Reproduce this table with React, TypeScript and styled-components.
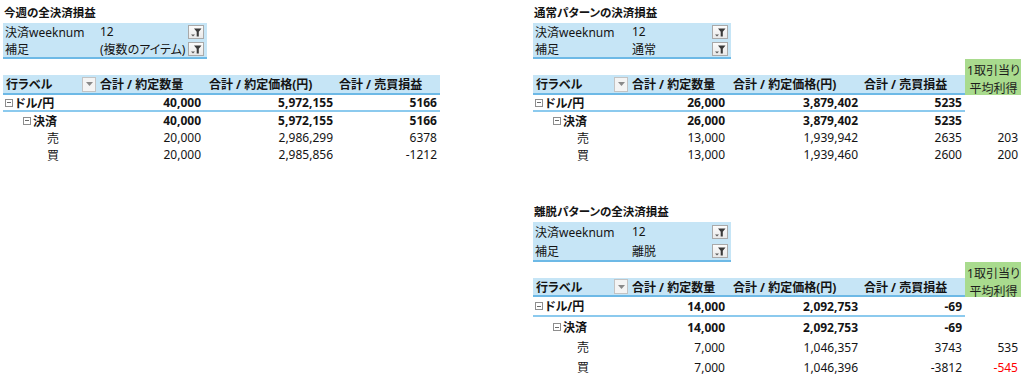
import React from 'react'
import styled, { createGlobalStyle } from 'styled-components'

const BLUE = '#c6e5f6'
const LINE = '#6db9e6'
const ROWLINE = '#8ccaee'
const GREEN = '#a9db8e'

type Row = {
  label: string
  level: 0 | 1 | 2
  values: string[]
  extra?: string
}

type Metrics = {
  title: number
  filter: number
  spacer: number
  head: number
  row: number
}

type Pivot = {
  title: string
  filters: [string, string][]
  cols: number[]
  rows: Row[]
  green?: boolean
  m: Metrics
}

const HEADERS = ['行ラベル', '合計 / 約定数量', '合計 / 約定価格(円)', '合計 / 売買損益']

const TOP: Metrics = { title: 23, filter: 17, spacer: 16, head: 20, row: 17 }
const BOTTOM: Metrics = { title: 22, filter: 19, spacer: 16, head: 19, row: 20 }

const weekly: Pivot = {
  title: '今週の全決済損益',
  filters: [['決済weeknum', '12'], ['補足', '(複数のアイテム)']],
  cols: [94, 107, 132, 104],
  m: TOP,
  rows: [
    { label: 'ドル/円', level: 0, values: ['40,000', '5,972,155', '5166'] },
    { label: '決済', level: 1, values: ['40,000', '5,972,155', '5166'] },
    { label: '売', level: 2, values: ['20,000', '2,986,299', '6378'] },
    { label: '買', level: 2, values: ['20,000', '2,985,856', '-1212'] },
  ],
}

const normal: Pivot = {
  title: '通常パターンの決済損益',
  filters: [['決済weeknum', '12'], ['補足', '通常']],
  cols: [96, 99, 133, 104, 56],
  green: true,
  m: TOP,
  rows: [
    { label: 'ドル/円', level: 0, values: ['26,000', '3,879,402', '5235'] },
    { label: '決済', level: 1, values: ['26,000', '3,879,402', '5235'] },
    { label: '売', level: 2, values: ['13,000', '1,939,942', '2635'], extra: '203' },
    { label: '買', level: 2, values: ['13,000', '1,939,460', '2600'], extra: '200' },
  ],
}

const exit: Pivot = {
  title: '離脱パターンの全決済損益',
  filters: [['決済weeknum', '12'], ['補足', '離脱']],
  cols: [96, 99, 133, 104, 56],
  green: true,
  m: BOTTOM,
  rows: [
    { label: 'ドル/円', level: 0, values: ['14,000', '2,092,753', '-69'] },
    { label: '決済', level: 1, values: ['14,000', '2,092,753', '-69'] },
    { label: '売', level: 2, values: ['7,000', '1,046,357', '3743'], extra: '535' },
    { label: '買', level: 2, values: ['7,000', '1,046,396', '-3812'], extra: '-545' },
  ],
}

const INDENT = [2, 20, 44]

function FilterIcon() {
  return (
    <FilterBtn>
      <svg width="14" height="12" viewBox="0 0 14 12">
        <path d="M5 2.5H12.5L9.8 5.8V10.5H7.7V5.8Z" fill="#3a3a3a" />
        <path d="M2 8.5H6L4 10.5Z" fill="#5a5a5a" />
      </svg>
    </FilterBtn>
  )
}

function DropDown() {
  return (
    <DropBtn>
      <svg width="7" height="4" viewBox="0 0 7 4">
        <path d="M0 0H7L3.5 4Z" fill="#8a8a8a" />
      </svg>
    </DropBtn>
  )
}

function PivotBlock({ data }: { data: Pivot }) {
  const { title, filters, cols, rows, green, m } = data
  const main = 4
  const filterWidth = cols[0] + cols[1] + 3

  return (
    <Block>
      <Title $h={m.title}>{title}</Title>

      <FilterBox $label={cols[0]} $w={filterWidth} $h={m.filter}>
        {filters.map(([k, v]) => (
          <React.Fragment key={k}>
            <FilterLabel>{k}</FilterLabel>
            <FilterValue>{v}</FilterValue>
            <FilterSlot><FilterIcon /></FilterSlot>
          </React.Fragment>
        ))}
      </FilterBox>

      <Table $cols={cols} $m={m} $n={rows.length}>
        <Spacer />
        {green &&
          <GreenCell>
            <span>1取引当り</span>
            <span>平均利得</span>
          </GreenCell>
        }

        {HEADERS.map((h, i) => (
          <HeadCell key={h} $first={i == 0} $pad={i == 2 ? 5 : 3}>
            {h}
            {i == 0 && <DropDown />}
          </HeadCell>
        ))}

        {rows.map((r, ri) => {
          const bold = r.level < 2
          const line = r.level == 0
          return (
            <React.Fragment key={ri}>
              <LabelCell $indent={INDENT[r.level]} $bold={bold} $line={line}>
                {r.level < 2 && <Collapse />}
                {r.label}
              </LabelCell>
              {r.values.map((v, vi) => (
                <ValueCell key={vi} $bold={bold} $line={line}>{v}</ValueCell>
              ))}
              {cols.length > main &&
                <ValueCell $neg={r.extra?.startsWith('-')}>{r.extra}</ValueCell>
              }
            </React.Fragment>
          )
        })}
      </Table>
    </Block>
  )
}

export default function App() {
  return (
    <>
      <GlobalStyle />
      <Page>
        <Column>
          <PivotBlock data={weekly} />
        </Column>
        <Column $gap={37}>
          <PivotBlock data={normal} />
          <PivotBlock data={exit} />
        </Column>
      </Page>
    </>
  )
}

const GlobalStyle = createGlobalStyle`
  html, body {
    margin: 0;
    padding: 0;
    background: #fff;
  }
  body {
    font-family: "Noto Sans", "Noto Sans CJK JP", sans-serif;
    font-size: 12px;
    color: #141414;
    font-feature-settings: "palt";
  }
`

const Page = styled.div`
  display: flex;
  gap: 93px;
  padding-left: 3px;
  width: 1024px;
  height: 375px;
  overflow: hidden;
  box-sizing: border-box;
`

const Column = styled.div<{ $gap?: number }>`
  display: flex;
  flex-direction: column;
  gap: ${p => p.$gap || 0}px;
`

const Block = styled.section`
  display: flex;
  flex-direction: column;
  align-items: flex-start;
`

const Title = styled.div<{ $h: number }>`
  height: ${p => p.$h}px;
  display: flex;
  align-items: flex-end;
  padding: 0 0 3px 1px;
  box-sizing: border-box;
  font-weight: 700;
  font-size: 11.5px;
  white-space: nowrap;
`

const FilterBox = styled.div<{ $label: number; $w: number; $h: number }>`
  display: grid;
  grid-template-columns: ${p => p.$label}px 1fr 19px;
  grid-auto-rows: ${p => p.$h}px;
  width: ${p => p.$w}px;
  background: ${BLUE};
  border-bottom: 2px solid ${LINE};
`

const FilterLabel = styled.div`
  display: flex;
  align-items: center;
  padding-left: 2px;
  white-space: nowrap;
`

const FilterValue = styled.div`
  display: flex;
  align-items: center;
  padding-left: 3px;
  white-space: nowrap;
`

const FilterSlot = styled.div`
  display: flex;
  align-items: center;
  justify-content: flex-start;
`

const FilterBtn = styled.span`
  display: flex;
  align-items: center;
  justify-content: center;
  width: 16px;
  height: 14px;
  box-sizing: border-box;
  border: 1px solid #a9a9a9;
  background: linear-gradient(#fbfbfb, #e9e9e9);
`

const Table = styled.div<{ $cols: number[]; $m: Metrics; $n: number }>`
  display: grid;
  grid-template-columns: ${p => p.$cols.map(c => `${c}px`).join(' ')};
  grid-template-rows: ${p => `${p.$m.spacer}px ${p.$m.head}px repeat(${p.$n}, ${p.$m.row}px)`};
`

const Spacer = styled.div`
  grid-column: 1 / span 4;
  grid-row: 1;
`

const GreenCell = styled.div`
  grid-column: 5;
  grid-row: 1 / span 2;
  background: ${GREEN};
  display: grid;
  grid-template-rows: 1fr 1fr;
  align-items: center;
  justify-items: center;
  padding: 2px 0 1px 1px;
  color: #1c1c1c;
  white-space: nowrap;
`

const HeadCell = styled.div<{ $first?: boolean; $pad: number }>`
  display: flex;
  align-items: center;
  justify-content: ${p => p.$first ? 'space-between' : 'flex-start'};
  padding: 0 ${p => p.$first ? 1 : 3}px 0 ${p => p.$pad}px;
  background: ${BLUE};
  border-bottom: 2px solid ${LINE};
  font-weight: 700;
  white-space: nowrap;
  overflow: hidden;
`

const DropBtn = styled.span`
  display: flex;
  align-items: center;
  justify-content: center;
  width: 14px;
  height: 15px;
  box-sizing: border-box;
  border: 1px solid #c3c3c3;
  background: #f4f4f4;
`

const Cell = styled.div<{ $bold?: boolean; $line?: boolean }>`
  display: flex;
  align-items: center;
  font-weight: ${p => p.$bold ? 700 : 400};
  border-bottom: ${p => p.$line ? `2px solid ${ROWLINE}` : 'none'};
  white-space: nowrap;
`

const LabelCell = styled(Cell)<{ $indent: number }>`
  padding-left: ${p => p.$indent}px;
  gap: 2px;
`

const ValueCell = styled(Cell)<{ $neg?: boolean }>`
  justify-content: flex-end;
  padding-right: 3px;
  color: ${p => p.$neg ? '#ff0000' : 'inherit'};
`

const Collapse = styled.span`
  position: relative;
  width: 8px;
  height: 8px;
  box-sizing: border-box;
  border: 1px solid #8e8e8e;
  background: #fff;

  &::after {
    content: '';
    position: absolute;
    left: 1px;
    right: 1px;
    top: 2.5px;
    height: 1px;
    background: #6a6a6a;
  }
`
